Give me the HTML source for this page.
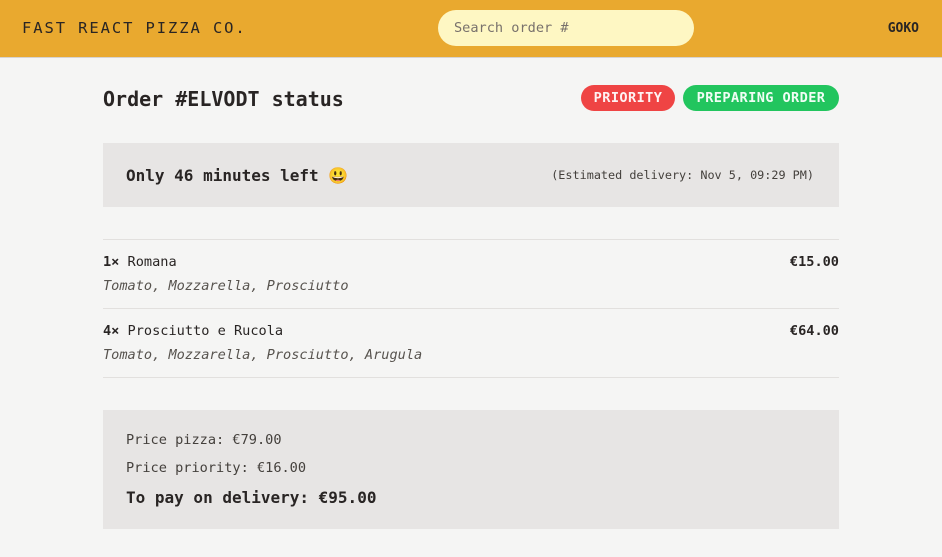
<!DOCTYPE html>
<html><head><meta charset="utf-8"><style>
*{box-sizing:border-box;margin:0;padding:0}
body{width:942px;height:557px;background:#f5f5f4;font-family:"DejaVu Sans Mono","Liberation Mono",monospace;color:#292524;overflow:hidden;position:relative}
.hdr{position:absolute;left:0;top:0;width:942px;height:58px;background:#e9a92f;border-bottom:1px solid #d6d3d1}
.logo{position:absolute;left:22px;top:19px;font-size:15.5px;letter-spacing:1.9px;color:#292524}
.search{position:absolute;left:438px;top:10px;width:256px;height:36px;border-radius:18px;background:#fef7c3;font-size:13.6px;color:#78716c;padding:10px 16px}
.user{position:absolute;right:23px;top:21px;font-size:13px;font-weight:bold}
.abs{position:absolute}
.title{left:103px;top:87px;font-size:20px;font-weight:bold}
.badge{top:85px;height:26px;border-radius:13px;color:#fef2f2;font-size:13.6px;font-weight:bold;letter-spacing:0.4px;text-align:center;line-height:26px}
.box{left:103px;width:736px;background:#e7e5e4}
.line{left:103px;width:736px;height:1px;background:#e2e0de}
.t14{font-size:13.6px}
.it{font-style:italic;color:#57534e}
</style></head><body>
<div class="hdr"><div class="logo">FAST REACT PIZZA CO.</div><div class="search">Search order #</div><div class="user">GOKO</div></div>
<div class="abs title">Order #ELVODT status</div>
<div class="abs badge" style="left:581px;width:94px;background:#ef4444">PRIORITY</div>
<div class="abs badge" style="left:683px;width:156px;background:#22c55e;color:#f0fdf4">PREPARING ORDER</div>
<div class="abs box" style="top:143px;height:64px"></div>
<div class="abs" style="left:126px;top:166px;font-size:16px;font-weight:bold">Only 46 minutes left 😃</div>
<div class="abs" style="right:128px;top:168px;font-size:11.8px;color:#44403c">(Estimated delivery: Nov 5, 09:29 PM)</div>
<div class="abs line" style="top:239px"></div>
<div class="abs t14" style="left:103px;top:254px"><b>1×</b> Romana</div>
<div class="abs t14" style="right:103px;top:254px;font-weight:bold">€15.00</div>
<div class="abs t14 it" style="left:103px;top:278px">Tomato, Mozzarella, Prosciutto</div>
<div class="abs line" style="top:308px"></div>
<div class="abs t14" style="left:103px;top:323px"><b>4×</b> Prosciutto e Rucola</div>
<div class="abs t14" style="right:103px;top:323px;font-weight:bold">€64.00</div>
<div class="abs t14 it" style="left:103px;top:347px">Tomato, Mozzarella, Prosciutto, Arugula</div>
<div class="abs line" style="top:377px"></div>
<div class="abs box" style="top:410px;height:119px"></div>
<div class="abs t14" style="left:126px;top:432px;color:#44403c">Price pizza: €79.00</div>
<div class="abs t14" style="left:126px;top:460px;color:#44403c">Price priority: €16.00</div>
<div class="abs" style="left:126px;top:488px;font-size:16px;font-weight:bold">To pay on delivery: €95.00</div>
</body></html>
